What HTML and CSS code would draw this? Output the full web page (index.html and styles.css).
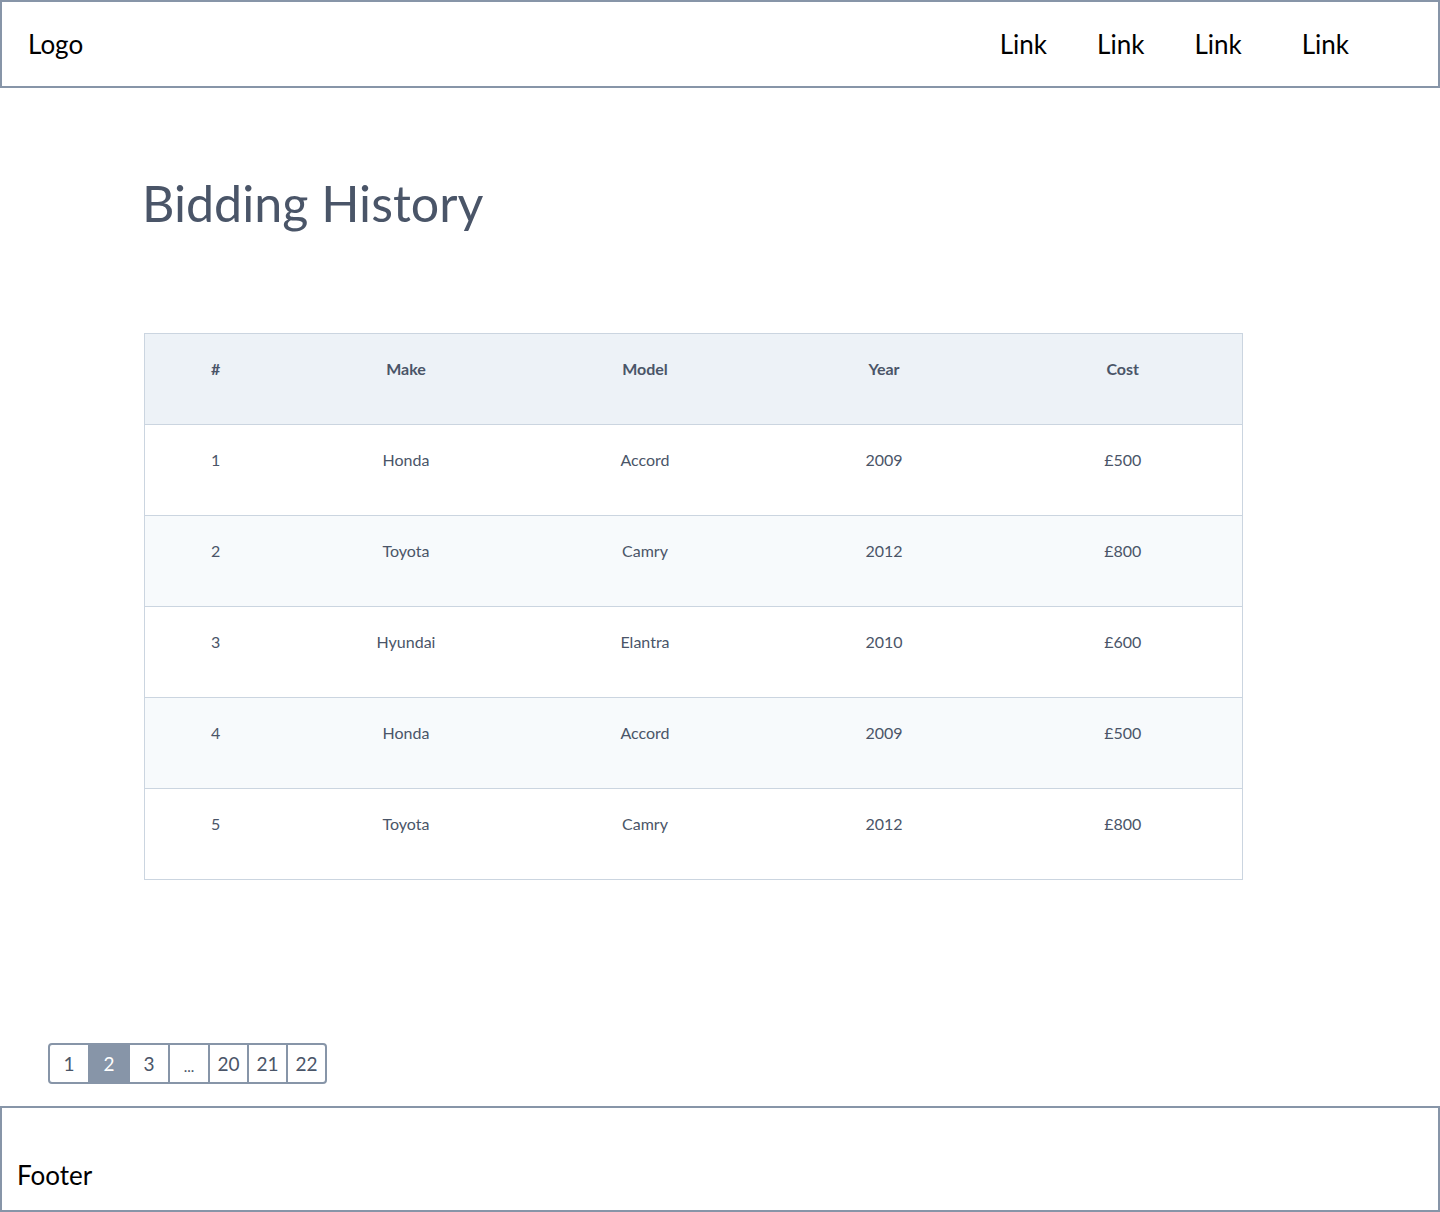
FILE: index.html
```html
<!DOCTYPE html>
<html>
<head>
<meta charset="utf-8">
<title>Bidding History</title>
<link rel="stylesheet" href="styles.css">
</head>
<body>
<header class="site-header">
  <div class="logo">Logo</div>
  <nav class="nav">
    <a class="nav-link" href="#">Link</a>
    <a class="nav-link" href="#">Link</a>
    <a class="nav-link" href="#">Link</a>
    <a class="nav-link nav-link-last" href="#">Link</a>
  </nav>
</header>
<main class="content">
  <h1 class="title">Bidding History</h1>
  <table class="bids">
    <colgroup>
      <col class="col-num">
      <col class="col-std">
      <col class="col-std">
      <col class="col-std">
      <col class="col-std">
    </colgroup>
    <thead>
      <tr><th>#</th><th>Make</th><th>Model</th><th>Year</th><th>Cost</th></tr>
    </thead>
    <tbody>
      <tr><td>1</td><td>Honda</td><td>Accord</td><td>2009</td><td>£500</td></tr>
      <tr><td>2</td><td>Toyota</td><td>Camry</td><td>2012</td><td>£800</td></tr>
      <tr><td>3</td><td>Hyundai</td><td>Elantra</td><td>2010</td><td>£600</td></tr>
      <tr><td>4</td><td>Honda</td><td>Accord</td><td>2009</td><td>£500</td></tr>
      <tr><td>5</td><td>Toyota</td><td>Camry</td><td>2012</td><td>£800</td></tr>
    </tbody>
  </table>
</main>
<div class="pager-wrap">
  <div class="pager">
    <a class="page page-first" href="#">1</a>
    <a class="page page-active" href="#">2</a>
    <a class="page" href="#">3</a>
    <a class="page page-ellipsis" href="#">...</a>
    <a class="page page-narrow" href="#">20</a>
    <a class="page page-narrow" href="#">21</a>
    <a class="page page-narrow" href="#">22</a>
  </div>
</div>
<footer class="site-footer">Footer</footer>
</body>
</html>
```
FILE: styles.css
```css
* { box-sizing: border-box; }
html, body { margin: 0; padding: 0; }
body {
  font-family: Lato, "Open Sans", sans-serif;
  background: #fff;
  color: #000;
  width: 1440px;
  height: 1212px;
  overflow: hidden;
}
.site-header {
  height: 88px;
  border: 2px solid #8795a8;
  display: flex;
  align-items: center;
  padding-left: 26px;
}
.logo {
  font-size: 26px;
  line-height: 30px;
}
.nav {
  margin-left: auto;
  margin-right: 89px;
  display: flex;
  gap: 50px;
}
.nav-link {
  font-size: 26px;
  line-height: 30px;
  color: #000;
  text-decoration: none;
}
.nav-link-last { margin-left: 10px; }

.content {
  padding: 0 0 0 144px;
  height: 955px;
}
.title {
  margin: 0 0 0 -2px;
  padding-top: 85px;
  font-size: 50.2px;
  line-height: 60px;
  font-weight: 400;
  color: #4a5568;
  height: 245px;
}
.bids {
  border-collapse: collapse;
  width: 1098px;
  table-layout: fixed;
  font-size: 16px;
  color: #4a5568;
}
.col-num { width: 142px; }
.col-std { width: 239px; }
.bids th, .bids td {
  text-align: center;
  padding: 24px 0 0;
  line-height: 22px;
  height: 91px;
  vertical-align: top;
}
.bids thead tr {
  background: #edf2f7;
  border: 1px solid #cbd5e0;
}
.bids th { font-weight: 700; }
.bids tbody tr {
  border: 1px solid #cbd5e0;
}
.bids tbody tr:nth-child(even) { background: #f7fafc; }

.pager-wrap {
  padding-left: 48px;
  height: 63px;
  display: flex;
  align-items: flex-start;
}
.pager {
  display: flex;
  border: 2px solid #8795a8;
  border-radius: 4px;
  overflow: hidden;
  height: 41px;
}
.page {
  width: 40px;
  display: flex;
  align-items: center;
  justify-content: center;
  font-size: 19px;
  color: #4a5568;
  text-decoration: none;
  border-left: 2px solid #8795a8;
}
.page-first { border-left: none; width: 38px; }
.page-narrow { width: 39px; }
.page-active { background: #8795a8; color: #fff; }
.page-ellipsis { font-size: 15px; padding-top: 5px; }

.site-footer {
  height: 106px;
  border: 2px solid #8795a8;
  padding: 49px 0 0 15px;
  font-size: 26px;
  line-height: 36px;
}
```
